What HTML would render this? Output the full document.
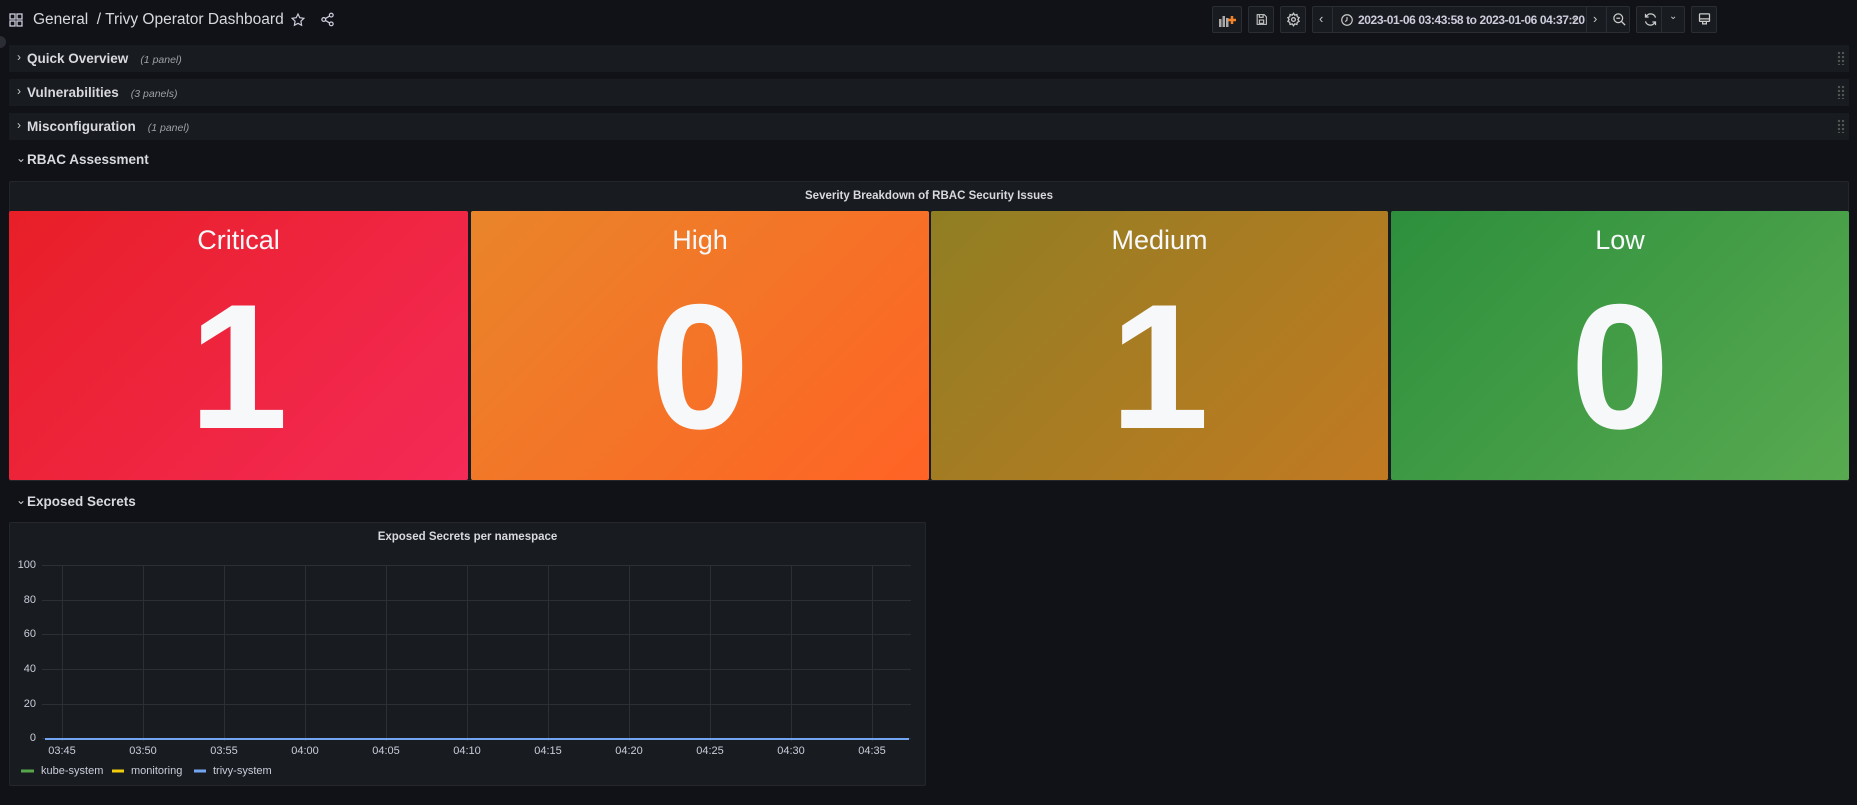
<!DOCTYPE html>
<html><head><meta charset="utf-8"><style>
*{box-sizing:border-box;margin:0;padding:0}
body{width:1857px;height:805px;background:#111217;font-family:"Liberation Sans",sans-serif;color:#ccccdc;position:relative;overflow:hidden}
.a{position:absolute}
.row{position:absolute;left:9px;width:1840px;height:27px;background:#181b1f;}
.row .t{position:absolute;left:18px;top:6px;font-size:13.5px;font-weight:bold;color:#d8d9e0}
.row .c{position:absolute;left:8px;top:5px;font-size:12px;color:#ccc}
.row .p{font-size:10.5px;font-style:italic;font-weight:normal;color:#9fa1a8;margin-left:12px}
.grip{position:absolute;right:4px;top:6px;width:8px;height:14px;background:radial-gradient(circle,#555 1px,transparent 1.4px) 0 0/4px 4px}
.btn{position:absolute;top:6px;height:27px;border:1px solid #2a2d33;border-radius:2px;background:#181b1f}
.tile{position:absolute;top:211px;height:269px;border-radius:2px;color:#f7f8fa;text-align:center}
.tile .l{position:absolute;left:0;right:0;top:14px;font-size:27px}
.tile .n{position:absolute;left:0;right:0;top:26px;font-size:178px;line-height:260px;font-weight:bold}
.yl{position:absolute;left:14px;width:22px;text-align:right;font-size:11px;color:#ccccdc}
.xl{position:absolute;top:745px;font-size:11px;color:#ccccdc;width:40px;text-align:center;margin-left:-20px}
</style></head><body>
<svg class="a" style="left:9px;top:13px" width="14" height="14" viewBox="0 0 14 14" fill="none" stroke="#ccccdc" stroke-width="1.3"><rect x="1" y="1" width="5" height="5"/><rect x="8" y="1" width="5" height="5"/><rect x="1" y="8" width="5" height="5"/><rect x="8" y="8" width="5" height="5"/></svg>
<div class="a" style="left:33px;top:11px;font-size:15.5px;color:#d8d9e0">General &nbsp;/ Trivy Operator Dashboard</div>
<svg class="a" style="left:290px;top:12px" width="16" height="16" viewBox="0 0 24 24" fill="none" stroke="#ccccdc" stroke-width="1.8"><path d="M12 3l2.7 5.6 6.1.9-4.4 4.3 1 6.1L12 17l-5.4 2.9 1-6.1L3.2 9.5l6.1-.9z"/></svg>
<svg class="a" style="left:320px;top:12px" width="15" height="15" viewBox="0 0 24 24" fill="none" stroke="#ccccdc" stroke-width="2"><circle cx="18" cy="5" r="3"/><circle cx="6" cy="12" r="3"/><circle cx="18" cy="19" r="3"/><path d="M8.6 13.5l6.8 4M15.4 6.5l-6.8 4"/></svg>
<div class="a" style="left:0;top:36px;width:6px;height:12px;background:#2a2d33;border-radius:0 6px 6px 0"></div>

<div class="btn" style="left:1212px;width:30px"><svg style="position:absolute;left:6px;top:6px" width="18" height="14" viewBox="0 0 18 14"><rect x="0" y="6" width="2.5" height="8" fill="#aaa"/><rect x="3.5" y="3" width="2.5" height="11" fill="#aaa"/><rect x="7" y="5" width="2.5" height="9" fill="#aaa"/><path d="M13 3v8M9 7h8" stroke="#f5832a" stroke-width="2.5"/></svg></div>
<div class="btn" style="left:1248px;width:26px"><svg style="position:absolute;left:6px;top:6px" width="13" height="13" viewBox="0 0 24 24" fill="none" stroke="#ccc" stroke-width="2"><path d="M4 3h13l4 4v14H4z"/><rect x="8" y="13" width="8" height="6"/><path d="M8 3v5h7V3"/></svg></div>
<div class="btn" style="left:1280px;width:26px"><svg style="position:absolute;left:5px;top:5px" width="15" height="15" viewBox="0 0 24 24" fill="none" stroke="#ccc" stroke-width="2"><circle cx="12" cy="12" r="3"/><path d="M12 2l2 3 3.5-1 .5 3.5L21 9l-2 3 2 3-3 1.5-.5 3.5-3.5-1-2 3-2-3-3.5 1L6 16.5 3 15l2-3-2-3 3-1.5L6.5 4 10 5z"/></svg></div>
<div class="btn" style="left:1312px;width:318px">
<div class="a" style="left:6px;top:4px;font-size:13px;color:#ccc">‹</div>
<div class="a" style="left:19px;top:0;width:1px;height:25px;background:#2a2d33"></div>
<svg class="a" style="left:27px;top:6px" width="14" height="14" viewBox="0 0 24 24" fill="none" stroke="#ccc" stroke-width="2"><circle cx="12" cy="12" r="9"/><path d="M12 7v5l-3 3"/></svg>
<div class="a" style="left:45px;top:6px;font-size:12px;font-weight:bold;letter-spacing:-0.4px;color:#ccccdc;white-space:nowrap">2023-01-06 03:43:58 to 2023-01-06 04:37:20</div>
<div class="a" style="left:257px;top:5px;font-size:10px;color:#ccc">⌄</div>
<div class="a" style="left:273px;top:0;width:1px;height:25px;background:#2a2d33"></div>
<div class="a" style="left:280px;top:4px;font-size:13px;color:#ccc">›</div>
<div class="a" style="left:293px;top:0;width:1px;height:25px;background:#2a2d33"></div>
<svg class="a" style="left:299px;top:5px" width="15" height="15" viewBox="0 0 24 24" fill="none" stroke="#ccc" stroke-width="2"><circle cx="10" cy="10" r="7"/><path d="M7 10h6M15 15l6 6"/></svg>
</div>
<div class="btn" style="left:1636px;width:49px">
<svg class="a" style="left:6px;top:5px" width="15" height="15" viewBox="0 0 24 24" fill="none" stroke="#ccc" stroke-width="2"><path d="M20 9a8 8 0 0 0-14-3L4 8M4 15a8 8 0 0 0 14 3l2-2M4 3v5h5M20 21v-5h-5"/></svg>
<div class="a" style="left:24px;top:0;width:1px;height:25px;background:#2a2d33"></div>
<div class="a" style="left:32px;top:4px;font-size:10px;color:#ccc">⌄</div></div>
<div class="btn" style="left:1691px;width:26px"><svg style="position:absolute;left:5px;top:5px" width="15" height="15" viewBox="0 0 24 24" fill="none" stroke="#ccc" stroke-width="2"><rect x="4" y="3" width="16" height="12" rx="1"/><path d="M4 11h16M9 15v4h6v-4"/></svg></div>

<div class="row" style="top:45px"><span class="c">›</span><span class="t">Quick Overview<span class="p">(1 panel)</span></span><div class="grip"></div></div>
<div class="row" style="top:79px"><span class="c">›</span><span class="t">Vulnerabilities<span class="p">(3 panels)</span></span><div class="grip"></div></div>
<div class="row" style="top:113px"><span class="c">›</span><span class="t">Misconfiguration<span class="p">(1 panel)</span></span><div class="grip"></div></div>
<div class="a" style="left:16px;top:151px;font-size:12px;color:#ccc">⌄</div>
<div class="a" style="left:27px;top:152px;font-size:13.5px;font-weight:bold;color:#d8d9e0">RBAC Assessment</div>

<div class="a" style="left:9px;top:181px;width:1840px;height:300px;background:#181b1f;border:1px solid #24262b;border-radius:2px"></div>
<div class="a" style="left:9px;top:190px;width:1840px;text-align:center;font-size:11.5px;font-weight:bold;color:#d8d9e0">Severity Breakdown of RBAC Security Issues</div>
<div class="tile" style="left:9px;width:459px;background:linear-gradient(135deg,#e81f27,#f52a57)"><div class="l">Critical</div><div class="n">1</div></div>
<div class="tile" style="left:471px;width:458px;background:linear-gradient(135deg,#e9852a,#ff6325)"><div class="l">High</div><div class="n">0</div></div>
<div class="tile" style="left:931px;width:457px;background:linear-gradient(135deg,#907e23,#c27a22)"><div class="l">Medium</div><div class="n">1</div></div>
<div class="tile" style="left:1391px;width:458px;background:linear-gradient(135deg,#2d8f3c,#58aa50)"><div class="l">Low</div><div class="n">0</div></div>

<div class="a" style="left:16px;top:493px;font-size:12px;color:#ccc">⌄</div>
<div class="a" style="left:27px;top:494px;font-size:13.5px;font-weight:bold;color:#d8d9e0">Exposed Secrets</div>

<div class="a" style="left:9px;top:522px;width:917px;height:264px;background:#181b1f;border:1px solid #24262b;border-radius:2px"></div>
<div class="a" style="left:9px;top:531px;width:917px;text-align:center;font-size:11.5px;font-weight:bold;color:#d8d9e0">Exposed Secrets per namespace</div>
<svg class="a" style="left:0;top:0" width="930" height="805">
<g stroke="#2c2f35" stroke-width="1">
<path d="M42 565.5H911M42 600.5H911M42 634.5H911M42 669.5H911M42 704.5H911M42 738.5H911"/>
<path d="M62.5 565V741M143.5 565V741M224.5 565V741M305.5 565V741M386.5 565V741M467.5 565V741M548.5 565V741M629.5 565V741M710.5 565V741M791.5 565V741M872.5 565V741"/>
</g>
<path d="M45 739H909" stroke="#73a6f2" stroke-width="2"/>
<path d="M21 771h13" stroke="#56a64b" stroke-width="3"/>
<path d="M112 771h12" stroke="#f2cc0c" stroke-width="3"/>
<path d="M194 771h12" stroke="#73a6f2" stroke-width="3"/>
</svg>
<div class="yl" style="top:559px">100</div>
<div class="yl" style="top:594px">80</div>
<div class="yl" style="top:628px">60</div>
<div class="yl" style="top:663px">40</div>
<div class="yl" style="top:698px">20</div>
<div class="yl" style="top:732px">0</div>
<div class="xl" style="left:62px">03:45</div>
<div class="xl" style="left:143px">03:50</div>
<div class="xl" style="left:224px">03:55</div>
<div class="xl" style="left:305px">04:00</div>
<div class="xl" style="left:386px">04:05</div>
<div class="xl" style="left:467px">04:10</div>
<div class="xl" style="left:548px">04:15</div>
<div class="xl" style="left:629px">04:20</div>
<div class="xl" style="left:710px">04:25</div>
<div class="xl" style="left:791px">04:30</div>
<div class="xl" style="left:872px">04:35</div>
<div class="a" style="left:41px;top:765px;font-size:11px;color:#ccccdc">kube-system</div>
<div class="a" style="left:131px;top:765px;font-size:11px;color:#ccccdc">monitoring</div>
<div class="a" style="left:213px;top:765px;font-size:11px;color:#ccccdc">trivy-system</div>
</body></html>
